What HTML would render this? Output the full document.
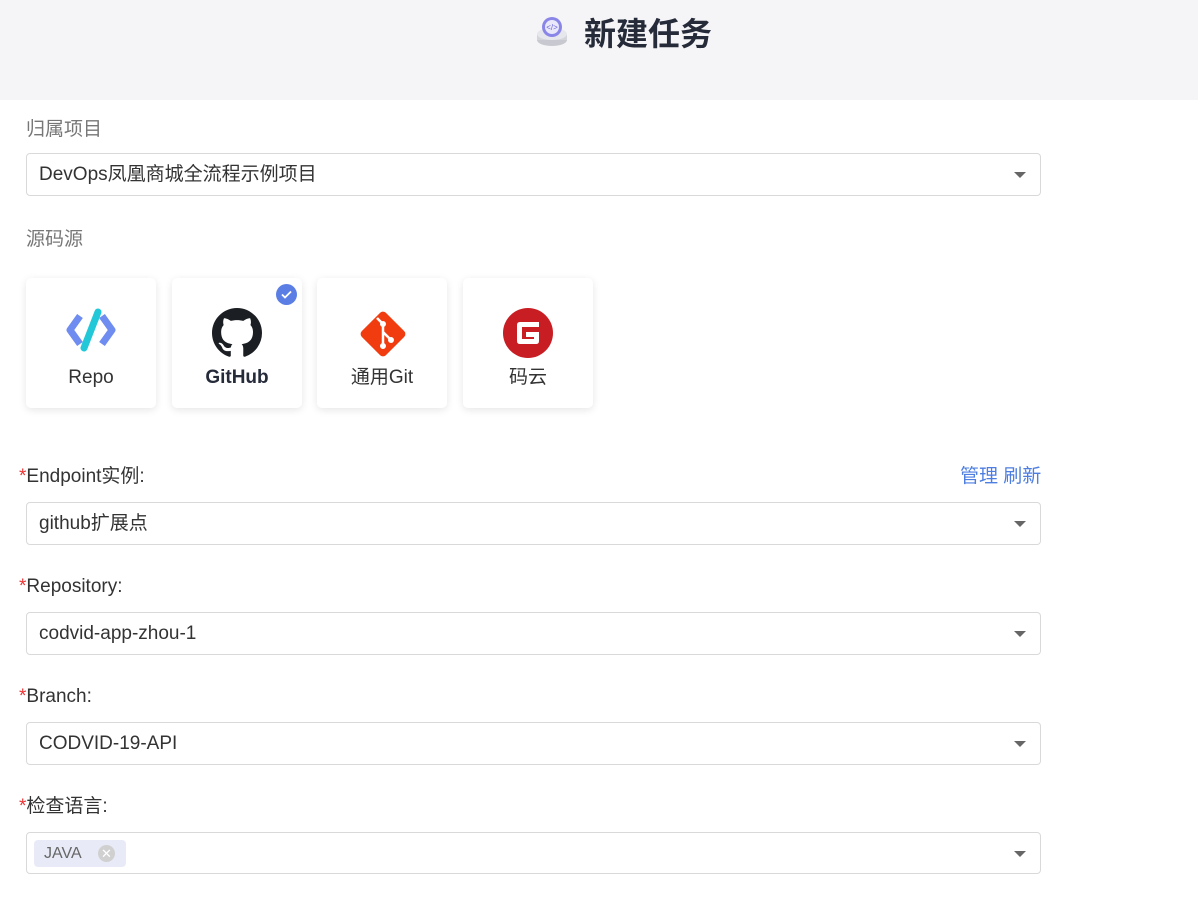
<!DOCTYPE html>
<html><head><meta charset="utf-8"><style>
*{box-sizing:border-box;margin:0;padding:0}
body{width:1198px;height:898px;overflow:hidden;background:#fff;font-family:"Liberation Sans","Noto Sans CJK SC",sans-serif;color:#333;position:relative}
.hdr{position:absolute;left:0;top:0;width:1198px;height:100px;background:#f5f5f7}
.title{position:absolute;left:584px;top:14px;font-size:32px;font-weight:bold;color:#262b3a;line-height:40px}
.lbl{position:absolute;font-size:19px;line-height:24px;color:#333}
.lbl.g{color:#777}
.req{color:#e33}
.sel{position:absolute;left:26px;width:1015px;height:43px;border:1px solid #d9d9d9;border-radius:4px;font-size:19px;line-height:42px;padding-left:12px;color:#333}
.sel:after{content:"";position:absolute;right:14px;top:18px;border-left:6px solid transparent;border-right:6px solid transparent;border-top:6px solid #666}
.card{position:absolute;top:278px;width:130px;height:130px;background:#fff;border-radius:5px;box-shadow:0 2px 8px rgba(0,0,0,0.1);text-align:center;font-size:19px;color:#333}
.card svg{position:absolute;left:40px;top:30px}
.card span{position:absolute;left:0;right:0;top:88px;line-height:24px}
.tag{position:absolute;left:7px;top:7px;height:27px;width:92px;background:#e8ebf7;border-radius:4px;font-size:16px;line-height:27px;padding-left:10px;color:#666}
.tag i{position:absolute;left:64px;top:5px;width:17px;height:17px;border-radius:50%;background:#d0d0d0;color:#fff;font-style:normal;font-size:13px;line-height:17px;text-align:center}
</style></head><body>
<div class="hdr"></div>
<svg style="position:absolute;left:535px;top:16px" width="38" height="34" viewBox="0 0 38 34">
<ellipse cx="17" cy="24" rx="15" ry="6" fill="#c8c9d0"/><rect x="2" y="18" width="30" height="6" fill="#d4d5db"/>
<ellipse cx="17" cy="18" rx="15" ry="6" fill="#e6e7ec"/>
<circle cx="17" cy="11" r="10" fill="#8a86e8"/><circle cx="17" cy="11" r="7" fill="#e9e8fb"/>
<text x="17" y="14" font-size="8" text-anchor="middle" fill="#6a64d8" font-family="Liberation Sans">&lt;/&gt;</text>
</svg>
<div class="title">新建任务</div>

<div class="lbl g" style="left:26px;top:118px">归属项目</div>
<div class="sel" style="top:153px">DevOps凤凰商城全流程示例项目</div>
<div class="lbl g" style="left:26px;top:228px">源码源</div>

<div class="card" style="left:26px">
<svg width="50" height="44" viewBox="0 0 50 44"><path d="M14 8 L4 22 L14 36" stroke="#6f8cf0" stroke-width="7" fill="none" stroke-linejoin="round"/><path d="M36 8 L46 22 L36 36" stroke="#6f8cf0" stroke-width="7" fill="none" stroke-linejoin="round"/><path d="M32 4 L18 40" stroke="#22c8d8" stroke-width="7" stroke-linecap="round"/></svg>
<span>Repo</span></div>
<div class="card" style="left:172px">
<svg width="50" height="50" viewBox="0 0 16 16"><path fill="#1b1f23" d="M8 0C3.58 0 0 3.58 0 8c0 3.540 2.290 6.530 5.470 7.590.4.07.55-.17.55-.38 0-.19-.01-.82-.01-1.49-2.01.37-2.53-.49-2.690-.94-.09-.23-.48-.94-.82-1.13-.28-.15-.68-.52-.01-.53.63-.01 1.080.58 1.230.82.72 1.210 1.870.87 2.330.66.07-.52.28-.87.51-1.07-1.78-.2-3.64-.89-3.64-3.95 0-.87.31-1.59.82-2.15-.08-.2-.36-1.020.08-2.12 0 0 .67-.21 2.2.82.64-.18 1.32-.27 2-.27.68 0 1.36.09 2 .27 1.53-1.04 2.2-.82 2.2-.82.44 1.1.16 1.92.08 2.12.51.56.82 1.27.82 2.15 0 3.07-1.87 3.75-3.65 3.95.29.25.54.73.54 1.48 0 1.07-.01 1.93-.01 2.2 0 .21.15.46.55.38A8.013 8.013 0 0016 8c0-4.42-3.58-8-8-8z"/></svg>
<span style="font-weight:bold;color:#262b3a">GitHub</span>
<div style="position:absolute;right:5px;top:6px;width:21px;height:21px;border-radius:50%;background:#5b7ee5"><svg width="21" height="21" viewBox="0 0 21 21" style="left:0;top:0"><path d="M6 10.5l3 3 6-6" stroke="#fff" stroke-width="1.8" fill="none"/></svg></div>
</div>
<div class="card" style="left:317px">
<svg width="52" height="52" viewBox="0 0 52 52"><rect x="9" y="9" width="34" height="34" rx="4" transform="rotate(45 26 26)" fill="#f03c0f"/><path d="M20 10 L26 16 V38 M26 24 L34 32" stroke="#fff" stroke-width="2.5" fill="none"/><circle cx="26" cy="16" r="3" fill="#fff"/><circle cx="26" cy="38" r="3" fill="#fff"/><circle cx="34" cy="32" r="3" fill="#fff"/></svg>
<span>通用Git</span></div>
<div class="card" style="left:463px">
<svg width="50" height="50" viewBox="0 0 50 50"><circle cx="25" cy="25" r="25" fill="#c71d23"/><path d="M36 14 H17 Q14 14 14 17 V33 Q14 36 17 36 H33 Q36 36 36 33 V24 H23 V29 H31 V31 H19 V19 H36 Z" fill="#fff"/></svg>
<span>码云</span></div>

<div class="lbl" style="left:19px;top:465px"><span class="req">*</span>Endpoint实例:</div>
<div class="lbl" style="left:960px;top:465px;color:#4d7ee0">管理 刷新</div>
<div class="sel" style="top:502px">github扩展点</div>
<div class="lbl" style="left:19px;top:575px"><span class="req">*</span>Repository:</div>
<div class="sel" style="top:612px">codvid-app-zhou-1</div>
<div class="lbl" style="left:19px;top:685px"><span class="req">*</span>Branch:</div>
<div class="sel" style="top:722px">CODVID-19-API</div>
<div class="lbl" style="left:19px;top:795px"><span class="req">*</span>检查语言:</div>
<div class="sel" style="top:832px;height:42px"><div class="tag">JAVA<i>✕</i></div></div>
</body></html>
